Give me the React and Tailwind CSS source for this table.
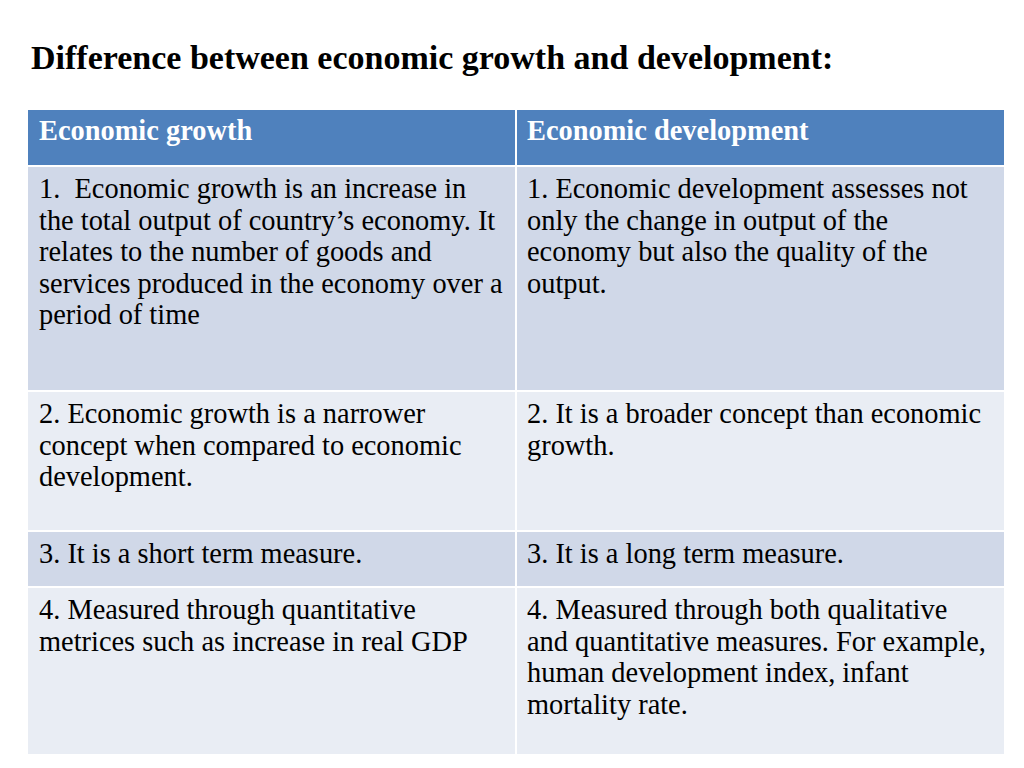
export default function App() {
  const rows = [
    {
      bg: "bg-[#d0d8e8]",
      h: "h-[223px]",
      a: "1.\u00a0 Economic growth is an increase in the total output of country’s economy. It relates to the number of goods and services produced in the economy over a period of time",
      b: "1. Economic development assesses not only the change in output of the economy but also the quality of the output.",
    },
    {
      bg: "bg-[#e9edf4]",
      h: "h-[138px]",
      a: "2. Economic growth is a narrower concept when compared to economic development.",
      b: "2. It is a broader concept than economic growth.",
    },
    {
      bg: "bg-[#d0d8e8]",
      h: "h-[54px]",
      a: "3. It is a short term measure.",
      b: "3. It is a long term measure.",
    },
    {
      bg: "bg-[#e9edf4]",
      h: "h-[166px]",
      a: "4. Measured through quantitative metrices such as increase in real GDP",
      b: "4. Measured through both qualitative and quantitative measures. For example, human development index, infant mortality rate.",
    },
  ];
  return (
    <div
      className="w-[1024px] h-[768px] bg-white text-black overflow-hidden"
      style={{ fontFamily: '"Liberation Serif", "Times New Roman", serif' }}
    >
      <h1 className="pt-[38px] pl-[31px] text-[34px] font-bold leading-[40px]">
        Difference between economic growth and development:
      </h1>
      <div className="mt-[32px] ml-[28px] w-[976px] grid grid-cols-2 gap-[2px]">
        <div className="bg-[#4f81bd] h-[55px] text-white font-bold text-[28.4px] leading-[31.5px] pl-[11px] pt-[5px]">
          Economic growth
        </div>
        <div className="bg-[#4f81bd] h-[55px] text-white font-bold text-[28.4px] leading-[31.5px] pl-[10px] pt-[5px]">
          Economic development
        </div>
        {rows.map((r, i) => (
          <>
            <div
              key={"a" + i}
              className={`${r.bg} ${r.h} text-[28.4px] leading-[31.5px] pl-[11px] pr-[11px] pt-[6px]`}
            >
              {r.a}
            </div>
            <div
              key={"b" + i}
              className={`${r.bg} ${r.h} text-[28.4px] leading-[31.5px] pl-[10px] pr-[12px] pt-[6px]`}
            >
              {r.b}
            </div>
          </>
        ))}
      </div>
    </div>
  );
}
